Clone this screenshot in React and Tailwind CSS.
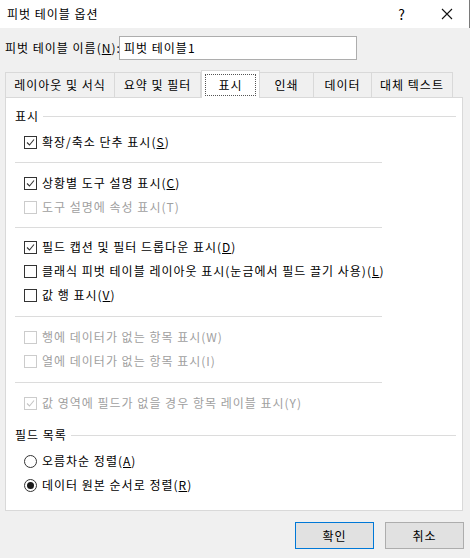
import React from 'react';

const font = { fontFamily: '"Noto Sans CJK KR", "Noto Sans", sans-serif' };

const CheckBox = ({ checked, disabled }) => (
    <span className={`w-[13px] h-[13px] border flex items-center justify-center bg-white shrink-0 ${disabled ? 'border-[#cccccc]' : 'border-[#333333]'}`}>
        {checked && (
            <svg width="11" height="11" viewBox="0 0 11 11">
                <path d="M2 5.5 L4.5 8 L9 2.5" fill="none" stroke={disabled ? '#c4c4c4' : '#333333'} strokeWidth="1.1" />
            </svg>
        )}
    </span>
);

const Radio = ({ checked }) => (
    <span className="w-[13px] h-[13px] rounded-full border border-[#333333] bg-white flex items-center justify-center shrink-0">
        {checked && <span className="w-[7px] h-[7px] rounded-full bg-[#1a1a1a]" />}
    </span>
);

const Row = ({ children, checked, disabled, radio, className = '' }) => (
    <div className={`h-[24px] flex items-center pl-[18px] gap-[5px] ${disabled ? 'text-[#a0a0a0]' : 'text-black'} ${className}`}>
        {radio ? <Radio checked={checked} /> : <CheckBox checked={checked} disabled={disabled} />}
        <span>{children}</span>
    </div>
);

const Sep = ({ className = '' }) => <div className={`h-px w-[367px] bg-[#dcdcdc] ml-[9px] ${className}`} />;

const Header = ({ children, className = '' }) => (
    <div className={`h-[20px] flex items-center pl-[9px] pr-[6px] gap-[4px] ${className}`}>
        <span>{children}</span>
        <div className="flex-1 h-px bg-[#dcdcdc]" />
    </div>
);

const tabs = [
    { label: '레이아웃 및 서식', w: 'w-[110px]' },
    { label: '요약 및 필터', w: 'w-[87px]' },
    { label: '표시', w: 'w-[59px]', active: true },
    { label: '인쇄', w: 'w-[55px]' },
    { label: '데이터', w: 'w-[59px]' },
    { label: '대체 텍스트', w: 'w-[82px]' },
];

export default function App() {
    return (
        <div className="w-[470px] h-[558px] bg-[#f0f0f0] text-[12px] tracking-[1px] text-black flex flex-col" style={font}>
            {/* Title bar */}
            <div className="h-[28px] bg-white flex items-center pl-[7px] border-r border-[#7a7a7a]">
                <span className="flex-1">피벗 테이블 옵션</span>
                <span className="w-[44px] text-center text-[14px]">?</span>
                <span className="w-[45px] flex justify-center">
                    <svg width="12" height="12" viewBox="0 0 12 12">
                        <path d="M1 1 L11 11 M11 1 L1 11" stroke="#111" strokeWidth="1.1" />
                    </svg>
                </span>
            </div>

            {/* Name row */}
            <div className="mt-[8px] h-[24px] flex items-center pl-[5px]">
                <span className="w-[114px] whitespace-nowrap">피벗 테이블 이름(<u>N</u>):</span>
                <div className="w-[238px] h-[24px] bg-white border border-[#adadad] flex items-center pl-[4px]">피벗 테이블1</div>
            </div>

            {/* Tabs */}
            <div className="mt-[10px] h-[27px] flex items-end pl-[5px] relative z-10">
                {tabs.map((t) =>
                    t.active ? (
                        <div key={t.label} className={`${t.w} h-[28px] bg-white border border-b-0 border-[#d9d9d9] flex items-center justify-center -mb-px px-[3px] pt-[1px]`}>
                            <span className="w-full h-[22px] border border-dotted border-[#555] flex items-center justify-center">{t.label}</span>
                        </div>
                    ) : (
                        <div key={t.label} className={`${t.w} h-[25px] bg-[#f0f0f0] border border-b-0 border-[#d9d9d9] -ml-px first:ml-0 flex items-center justify-center whitespace-nowrap`}>
                            {t.label}
                        </div>
                    )
                )}
            </div>

            {/* Panel */}
            <div className="ml-[5px] w-[458px] h-[414px] bg-white border border-[#d9d9d9] flex flex-col">
                <Header className="mt-[8px]">표시</Header>
                <Row checked className="mt-[4px]">확장/축소 단추 표시(<u>S</u>)</Row>
                <Sep className="mt-[8px]" />
                <Row checked className="mt-[8px]">상황별 도구 설명 표시(<u>C</u>)</Row>
                <Row disabled>도구 설명에 속성 표시(T)</Row>
                <Sep className="mt-[8px]" />
                <Row checked className="mt-[7px]">필드 캡션 및 필터 드롭다운 표시(<u>D</u>)</Row>
                <Row>클래식 피벗 테이블 레이아웃 표시(눈금에서 필드 끌기 사용)(<u>L</u>)</Row>
                <Row>값 행 표시(<u>V</u>)</Row>
                <Sep className="mt-[9px]" />
                <Row disabled className="mt-[8px]">행에 데이터가 없는 항목 표시(W)</Row>
                <Row disabled>열에 데이터가 없는 항목 표시(I)</Row>
                <Sep className="mt-[9px]" />
                <Row disabled checked className="mt-[8px]">값 영역에 필드가 없을 경우 항목 레이블 표시(Y)</Row>
                <Header className="mt-[10px]">필드 목록</Header>
                <Row radio className="mt-[4px]">오름차순 정렬(<u>A</u>)</Row>
                <Row radio checked>데이터 원본 순서로 정렬(<u>R</u>)</Row>
            </div>

            {/* Buttons */}
            <div className="mt-[11px] flex justify-end gap-[11px] pr-[6px]">
                <button className="w-[79px] h-[27px] bg-[#e1e1e1] border border-[#0078d7]">확인</button>
                <button className="w-[79px] h-[27px] bg-[#e1e1e1] border border-[#adadad]">취소</button>
            </div>
        </div>
    );
}
